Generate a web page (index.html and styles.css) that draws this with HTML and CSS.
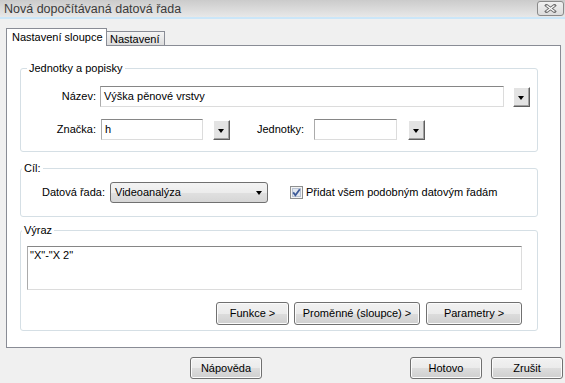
FILE: index.html
```html
<!DOCTYPE html>
<html>
<head>
<meta charset="UTF-8">
<title>Nová dopočítávaná datová řada</title>
<link rel="stylesheet" href="styles.css">
</head>
<body>
<div class="titlebar">
  <span class="caption">Nová dopočítávaná datová řada</span>
  <span class="close">
    <svg width="13" height="9" viewBox="0 0 13 9">
      <path d="M2.5 1.5 L10.5 7.5 M10.5 1.5 L2.5 7.5" stroke="#707070" stroke-width="3.2" stroke-linecap="square"/>
      <path d="M2.5 1.5 L10.5 7.5 M10.5 1.5 L2.5 7.5" stroke="#fff" stroke-width="1.2"/>
    </svg>
  </span>
</div>
<div class="tabs">
  <div class="tab active">Nastavení sloupce</div>
  <div class="tab">Nastavení</div>
</div>
<div class="panel">
  <!-- skupina jednotek -->
  <fieldset class="group units">
    <legend>Jednotky a popisky</legend>
    <div class="row">
      <span class="lbl">Název:</span>
      <div class="field name">Výška pěnové vrstvy</div>
      <span class="drop name-drop"></span>
    </div>
    <div class="row next">
      <span class="lbl">Značka:</span>
      <div class="field symbol">h</div>
      <span class="drop symbol-drop"></span>
      <span class="unit-lbl">Jednotky:</span>
      <div class="field unit"></div>
      <span class="drop unit-drop"></span>
    </div>
  </fieldset>
  <!-- cil -->
  <fieldset class="group target">
    <legend>Cíl:</legend>
    <div class="row">
      <span class="set-lbl">Datová řada:</span>
      <div class="select">Videoanalýza<span class="arrow"></span></div>
      <span class="check">
        <svg width="13" height="13" viewBox="0 0 13 13">
          <rect x="0.5" y="0.5" width="12" height="12" fill="#f4f4f4" stroke="#8e8f8f"/>
          <rect x="2.5" y="2.5" width="8" height="8" fill="#e2e7ef" stroke="#b9c3d3"/>
          <path d="M3.2 6.4 L5.4 9.2 L9.8 3.2" fill="none" stroke="#3d5a98" stroke-width="1.8"/>
        </svg>
      </span>
      <span class="check-lbl">Přidat všem podobným datovým řadám</span>
    </div>
  </fieldset>
  <!-- vyraz -->
  <fieldset class="group expr">
    <legend>Výraz</legend>
    <div class="area">"X"-"X 2"</div>
    <div class="buttons">
      <span class="btn funkce">Funkce &gt;</span>
      <span class="btn vars">Proměnné (sloupce) &gt;</span>
      <span class="btn params">Parametry &gt;</span>
    </div>
  </fieldset>
</div>
<div class="footer">
  <span class="btn help">Nápověda</span>
  <span class="btn ok">Hotovo</span>
  <span class="btn cancel">Zrušit</span>
</div>
</body>
</html>
```

FILE: styles.css
```css
* {
  margin: 0;
  padding: 0;
  box-sizing: border-box;
}

body {
  width: 565px;
  height: 383px;
  overflow: hidden;
  background-color: #f0f0f0;
  font-family: "Liberation Sans", Arial, sans-serif;
  font-size: 11px;
  line-height: 13px;
  color: #000;
}

.titlebar {
  height: 19px;
  display: flex;
  justify-content: space-between;
  align-items: flex-start;
  padding: 1px 1px 0 4px;
  background: linear-gradient(#cbcbcb, #e8e8e8);
  border-bottom: 2px solid #cbe6f8;
}

.caption {
  font-size: 12.5px;
  line-height: 16px;
  color: #3a3a3a;
}

.close {
  width: 27px;
  height: 15px;
  display: flex;
  justify-content: center;
  align-items: center;
  border: 1px solid #8a8a8a;
  border-radius: 3px;
  background: linear-gradient(#f0f0f0, #dcdcdc);
}

.tabs {
  height: 26px;
  display: flex;
  align-items: flex-end;
  padding-left: 6px;
}

.tab {
  position: relative;
  border: 1px solid #898c95;
  border-bottom: 0;
}

.tab.active {
  width: 101px;
  height: 18px;
  margin-bottom: -1px;
  padding: 2px 0 0 5px;
  background-color: #fff;
  z-index: 1;
}

.tab:not(.active) {
  width: 58px;
  height: 14px;
  border-left: 0;
  padding: 1px 0 0 3px;
  line-height: 12px;
  background: linear-gradient(#f4f4f4, #dcdcdc);
}

.panel {
  width: 555px;
  height: 303px;
  margin-left: 6px;
  padding: 15px 22px 0 13px;
  border: 1px solid #898c95;
  background-color: #fff;
}

.group {
  border: 1px solid #d5dfe5;
  border-radius: 3px;
  padding: 0;
}

.group legend {
  line-height: 14px;
  padding: 0 2px;
  margin-left: 1px;
}

.units legend {
  margin-left: 6px;
}

.units {
  padding: 11px 0 11px 0;
}

.target {
  margin-top: 9px;
  padding: 7px 0 13px 0;
}

.expr {
  margin-top: 6px;
  padding: 9px 0 5px 0;
}

.row {
  height: 21px;
  display: flex;
  align-items: center;
}

.row.next {
  margin-top: 12px;
}

.lbl {
  width: 75px;
  text-align: right;
}

.field {
  height: 21px;
  padding: 3px 0 0 3px;
  border: 1px solid;
  border-color: #868686 #dcdcdc #dcdcdc #ababab;
  background-color: #fff;
}

.name {
  width: 404px;
  margin-left: 4px;
}

.symbol {
  width: 102px;
  margin-left: 5px;
}

.unit-lbl {
  width: 52px;
  margin-left: 27px;
}

.unit {
  width: 83px;
  margin-left: 5px;
}

.drop {
  position: relative;
  width: 17px;
  height: 20px;
  border: 1px solid;
  border-color: #fff #5e5e5e #5e5e5e #fff;
  box-shadow: inset -1px -1px #a0a0a0;
  background-color: #e3e3e3;
}

.drop::after {
  content: "";
  position: absolute;
  left: 4px;
  top: 8px;
  border-left: 3.5px solid transparent;
  border-right: 3.5px solid transparent;
  border-top: 4px solid #000;
}

.name-drop {
  margin-left: 9px;
}

.symbol-drop {
  margin-left: 10px;
}

.unit-drop {
  margin-left: 11px;
}

.set-lbl {
  margin-left: 21px;
  width: 63px;
}

.select {
  position: relative;
  width: 158px;
  height: 21px;
  margin-left: 5px;
  padding: 3px 0 0 4px;
  border: 1px solid #707070;
  border-radius: 3px;
  background: linear-gradient(#f3f3f3 0%, #ececec 50%, #e0e0e0 50%, #d6d6d6 100%);
}

.arrow {
  position: absolute;
  right: 5px;
  top: 8px;
  border-left: 3.5px solid transparent;
  border-right: 3.5px solid transparent;
  border-top: 4px solid #000;
}

.check {
  width: 13px;
  height: 13px;
  margin-left: 22px;
  display: flex;
}

.check-lbl {
  margin-left: 3px;
}

.area {
  width: 495px;
  height: 44px;
  margin-left: 6px;
  padding: 2px 0 0 2px;
  border: 1px solid;
  border-color: #868686 #dcdcdc #dcdcdc #ababab;
  background-color: #fff;
  font-size: 11px;
}

.buttons {
  display: flex;
  justify-content: flex-end;
  margin: 12px 15px 0 0;
}

.btn {
  height: 23px;
  display: flex;
  justify-content: center;
  align-items: center;
  border: 1px solid #707070;
  border-radius: 3px;
  box-shadow: inset 0 0 0 1px #fbfbfb;
  background: linear-gradient(#f2f2f2 0%, #ebebeb 50%, #dddddd 50%, #cfcfcf 100%);
}

.funkce {
  width: 73px;
}

.vars {
  width: 126px;
  margin-left: 5px;
}

.params {
  width: 96px;
  margin-left: 6px;
}

.footer {
  display: flex;
  margin-top: 9px;
  padding-right: 2px;
}

.footer .btn {
  width: 72px;
  height: 22px;
}

.help {
  margin-left: 190px;
}

.ok {
  margin-left: auto;
}

.cancel {
  margin-left: 9px;
}
```
